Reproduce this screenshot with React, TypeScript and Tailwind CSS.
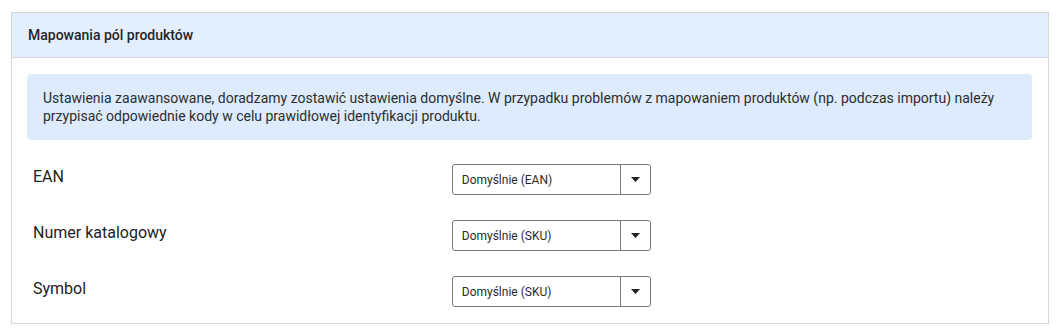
const fields = [
  { label: "EAN", value: "Domyślnie (EAN)" },
  { label: "Numer katalogowy", value: "Domyślnie (SKU)" },
  { label: "Symbol", value: "Domyślnie (SKU)" },
];

function SelectBox({ value }: { value: string }) {
  return (
    <div className="flex h-[31px] w-[199px] items-stretch rounded-[3px] border border-[#7a7a7a] bg-white">
      <div className="flex flex-1 items-center pl-[9px] text-[12px] text-[#2b2b2b]">{value}</div>
      <div className="flex w-[30px] items-center justify-center border-l border-[#7a7a7a]">
        <svg width="9" height="5" viewBox="0 0 9 5">
          <path d="M0 0h9L4.5 5z" fill="#222" />
        </svg>
      </div>
    </div>
  );
}

export default function App() {
  return (
    <div className="min-h-[336px] bg-white pl-[11px] pr-[12px] pt-[12px] font-['Roboto',sans-serif]">
      <div className="border border-[#d6d6d6] bg-white">
        <div className="flex h-[45px] items-center border-b border-[#d6d6d6] bg-[#e3effd] px-4 text-[14px] font-medium text-[#1f2630]">
          Mapowania pól produktów
        </div>
        <div className="pb-[16px] pl-[15px] pr-[16px] pt-[16px]">
          <div className="rounded-[4px] bg-[#ddebfc] px-4 py-[15px] text-[14px] leading-[18px] text-[#2e2e2e]">
            Ustawienia zaawansowane, doradzamy zostawić ustawienia domyślne. W przypadku problemów z mapowaniem produktów (np. podczas importu) należy przypisać odpowiednie kody w celu prawidłowej identyfikacji produktu.
          </div>
          <div className="mt-[24px] flex flex-col gap-[25px]">
            {fields.map((f) => (
              <div key={f.label} className="grid grid-cols-12 items-start">
                <div className="col-span-5 px-[6px] pt-px text-[16px] leading-6 text-[#222]">{f.label}</div>
                <div className="col-span-7 px-[6px]">
                  <SelectBox value={f.value} />
                </div>
              </div>
            ))}
          </div>
        </div>
      </div>
    </div>
  );
}
